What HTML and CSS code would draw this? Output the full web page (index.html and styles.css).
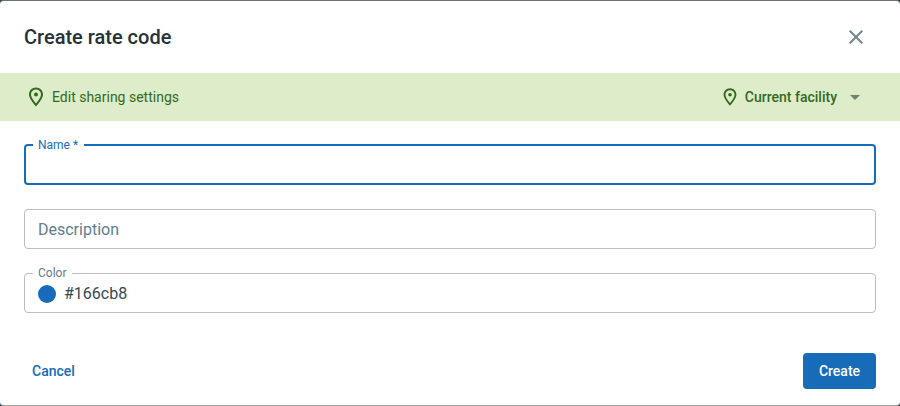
FILE: index.html
```html
<!DOCTYPE html>
<html lang="en">
<head>
    <meta charset="UTF-8">
    <meta name="viewport" content="width=device-width, initial-scale=1.0">
    <title>Create rate code</title>
    <link rel="stylesheet" href="styles.css">
</head>
<body>
    <div class="dialog">
        <div class="dialog-header">
            <h2>Create rate code</h2>
            <svg class="close-icon" width="24" height="24" viewBox="0 0 24 24"><path d="M19 6.410 17.590 5 12 10.590 6.410 5 5 6.410 10.590 12 5 17.590 6.410 19 12 13.410 17.590 19 19 17.590 13.410 12z"/></svg>
        </div>
        <div class="sharing-bar">
            <div class="sharing-left">
                <svg class="pin" width="24" height="24" viewBox="0 0 24 24"><path d="M12 2.500c-3.900 0-7 3.100-7 7 0 2.600 2.300 6.600 7 12 4.700-5.400 7-9.400 7-12 0-3.900-3.100-7-7-7zm0 16c-3.300-4-5-7-5-9 0-2.800 2.200-5 5-5s5 2.200 5 5c0 2-1.700 5-5 9z"/><circle cx="12" cy="9.500" r="2"/></svg>
                <span>Edit sharing settings</span>
            </div>
            <div class="sharing-right">
                <svg class="pin" width="22" height="22" viewBox="0 0 24 24"><path d="M12 2.500c-3.900 0-7 3.100-7 7 0 2.600 2.300 6.600 7 12 4.700-5.400 7-9.400 7-12 0-3.900-3.100-7-7-7zm0 16c-3.300-4-5-7-5-9 0-2.800 2.200-5 5-5s5 2.200 5 5c0 2-1.700 5-5 9z"/><circle cx="12" cy="9.500" r="2"/></svg>
                <span class="facility">Current facility</span>
                <span class="caret"></span>
            </div>
        </div>
        <div class="form">
            <fieldset class="field field-active">
                <legend>Name *</legend>
            </fieldset>
            <div class="field-plain">Description</div>
            <fieldset class="field">
                <legend>Color</legend>
                <div class="color-value">
                    <span class="swatch"></span>
                    <span>#166cb8</span>
                </div>
            </fieldset>
        </div>
        <div class="dialog-footer">
            <button class="btn-cancel">Cancel</button>
            <button class="btn-create">Create</button>
        </div>
    </div>
</body>
</html>
```

FILE: styles.css
```css
* {
    margin: 0;
    padding: 0;
    box-sizing: border-box;
}

body {
    font-family: Roboto, "Liberation Sans", sans-serif;
    background: #37474f;
    height: 406px;
    overflow: hidden;
}

.dialog {
    height: 406px;
    background: #fff;
    border-top: 1px solid #6f7072;
    border-bottom: 1px solid #9c9e9f;
    border-radius: 4px;
    display: flex;
    flex-direction: column;
}

.dialog-header {
    height: 72px;
    display: flex;
    align-items: center;
    justify-content: space-between;
    padding: 0 32px 0 24px;
}

.dialog-header h2 {
    font-size: 20px;
    font-weight: 500;
    color: #263238;
}

.close-icon {
    fill: #78858c;
}

.sharing-bar {
    height: 48px;
    background: #deedc9;
    display: flex;
    align-items: center;
    justify-content: space-between;
    padding: 0 40px 0 24px;
    color: #33691e;
    font-size: 14px;
}

.sharing-left,
.sharing-right {
    display: flex;
    align-items: center;
}

.sharing-left span {
    margin-left: 4px;
}

.pin {
    fill: #33691e;
}

.facility {
    margin-left: 4px;
    font-weight: 500;
}

.caret {
    margin-left: 13px;
    border-left: 5px solid transparent;
    border-right: 5px solid transparent;
    border-top: 5px solid #6f8272;
}

.form {
    padding: 24px 24px 0;
    display: flex;
    flex-direction: column;
    gap: 24px;
}

.field {
    height: 45px;
    margin-top: -5px;
    border: 1px solid #bdbdbd;
    border-radius: 4px;
    padding: 0 13px;
}

.field legend {
    font-size: 12px;
    line-height: 10px;
    color: #607d8b;
    padding: 0 6px 0 5px;
    margin-left: -5px;
}

.field-active {
    border: 2px solid #166cb8;
    padding: 0 12px;
}

.field-active legend {
    color: #166cb8;
}

.field-plain {
    height: 40px;
    border: 1px solid #bdbdbd;
    border-radius: 4px;
    padding: 0 13px;
    display: flex;
    align-items: center;
    font-size: 16px;
    color: #607d8b;
}

.color-value {
    display: flex;
    align-items: center;
    gap: 8px;
    font-size: 16px;
    color: #37474f;
    height: 31px;
}

.swatch {
    width: 18px;
    height: 18px;
    border-radius: 50%;
    background: #166cb8;
}

.dialog-footer {
    margin-top: auto;
    padding: 0 24px 16px;
    display: flex;
    justify-content: space-between;
    align-items: center;
}

button {
    font-family: inherit;
    font-size: 14px;
    font-weight: 500;
    border: none;
    cursor: pointer;
}

.btn-cancel {
    background: none;
    color: #166cb8;
    padding: 0 8px;
    height: 36px;
}

.btn-create {
    background: #166cb8;
    color: #fff;
    width: 73px;
    height: 36px;
    border-radius: 4px;
}
```
